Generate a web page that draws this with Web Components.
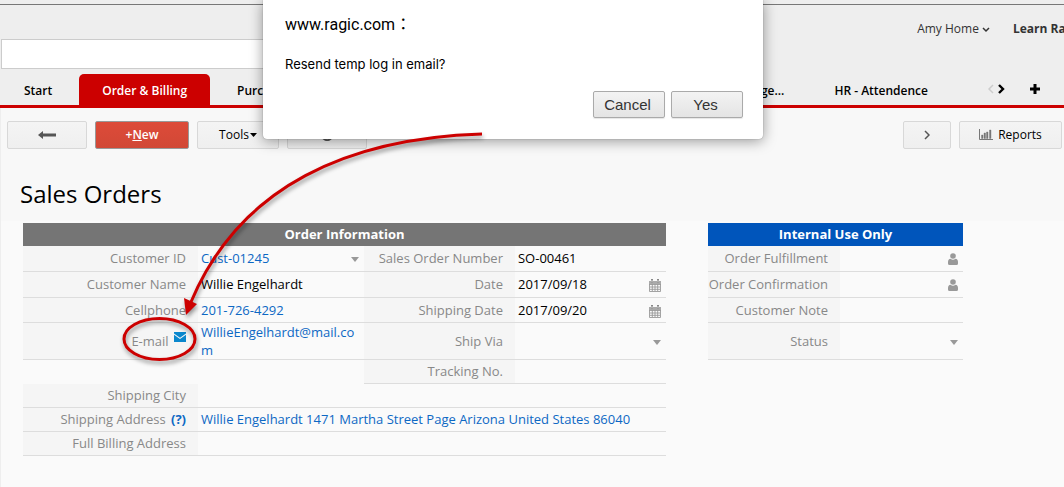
<!DOCTYPE html>
<html lang="en">
<head>
<meta charset="utf-8">
<meta name="viewport" content="width=device-width, initial-scale=1">
<title>Sales Orders</title>
<style>
  html { background: #fafafa; }
  body { margin: 0; position: relative; overflow-x: hidden; color: #000; font: 13px/18px "Open Sans", "Noto Sans", sans-serif; }
</style>
</head>
<body>
<app-header></app-header>
<tab-bar>
  <tab-item>Start</tab-item>
  <tab-item current>Order &amp; Billing</tab-item>
  <tab-item>Purchase</tab-item>
  <tab-item slot="late">Manage...</tab-item>
  <tab-item slot="late">HR - Attendence</tab-item>
</tab-bar>
<order-page heading="Sales Orders">
  <tool-button slot="tools" size="m" label="Back"><ui-icon name="back"></ui-icon></tool-button>
  <tool-button slot="tools" size="l" primary><span>+<u>N</u>ew</span></tool-button>
  <tool-button slot="tools" size="menu"><span>Tools</span><ui-icon name="caret"></ui-icon></tool-button>
  <tool-button slot="tools" size="m" label="Refresh"><ui-icon name="refresh"></ui-icon></tool-button>
  <tool-button slot="actions" size="s" label="Next record"><ui-icon name="right"></ui-icon></tool-button>
  <tool-button slot="actions" size="xl"><ui-icon name="chart"></ui-icon><span>Reports</span></tool-button>
  <order-table></order-table>
  <internal-table></internal-table>
</order-page>
<confirm-dialog>
  <span slot="site">www.ragic.com：</span>
  Resend temp log in email?
</confirm-dialog>
<callout-mark></callout-mark>

<script>
const define = (name, html, after) => customElements.define(name, class extends HTMLElement {
  constructor() {
    super();
    this.attachShadow({ mode: 'open' }).innerHTML = html;
  }
  connectedCallback() { if (after) after(this, this.shadowRoot); }
});

const icons = {
  back: [18, 8, '<path d="M0 4 5 0v2.500h13v3H5V8z" fill="#555"/>'],
  caret: [7, 4, '<path d="M0 0h7L3.500 4z" fill="#000"/>'],
  refresh: [12, 12, '<path d="M10 3a5 5 0 1 0 1 4" fill="none" stroke="#555" stroke-width="2"/><path d="M12 0v5H7z" fill="#555"/>'],
  right: [6, 10, '<path d="M1 1l4 4-4 4" fill="none" stroke="#555" stroke-width="1.5"/>'],
  chart: [14, 12, '<path d="M.5 0v10.500H14" fill="none" stroke="#777"/><path d="M2.500 6h1.500v3.500H2.500zM5 4h1.500v5.500H5zM7.500 3H9v6.500H7.500zM10.500 1H12v8.500h-1.500z" fill="#777" stroke="#777" stroke-width=".4"/>'],
  down: [8, 6, '<path d="M1 1l3 3 3-3" fill="none" stroke="#333" stroke-width="1.500"/>'],
  prev: [6, 10, '<path d="M5 1L1 5l4 4" fill="none" stroke="#ccc" stroke-width="1.500"/>'],
  next: [7, 10, '<path d="M1 1l4 4-4 4" fill="none" stroke="#000" stroke-width="2.400"/>'],
  plus: [10, 10, '<path d="M5 0v10M0 5h10" stroke="#000" stroke-width="3"/>'],
  select: [8, 5, '<path d="M0 0h8L4 5z" fill="#999"/>'],
  calendar: [12, 13, '<path d="M.5 2.500h11v10H.5zM0 5.500h12M1 8h10M1 10.300h10M3.300 5v7M6 5v7M8.700 5v7" fill="none" stroke="#999" stroke-width=".9"/><path d="M0 2h12v3H0z" fill="#aaa"/><path d="M3 0v4M9 0v4" stroke="#888" stroke-width="2"/><path d="M3 1v2.500M9 1v2.500" stroke="#fff" stroke-width=".7"/>'],
  person: [10, 12, '<circle cx="5" cy="3" r="2.800" fill="#999"/><path d="M0 10.500V9q0-3 2.500-3.200Q5 7.500 7.500 5.800 10 6 10 9v1.500Q10 12 8.500 12h-7Q0 12 0 10.500z" fill="#999"/>'],
  mail: [12, 10, '<path d="M0 0h12v1.500L6 5.800 0 1.500z" fill="#0a87cd"/><path d="M0 2.800l6 4.200L12 2.800V10H0z" fill="#0a87cd"/>']
};
define('ui-icon', '<style>:host{display:inline-block;flex:none}svg{display:block}</style><svg aria-hidden="true"></svg>', (el, root) => {
  const [w, h, art] = icons[el.getAttribute('name')];
  const svg = root.querySelector('svg');
  svg.setAttribute('width', w);
  svg.setAttribute('height', h);
  svg.setAttribute('viewBox', `0 0 ${w} ${h}`);
  svg.innerHTML = art;
});

define('app-header', `<style>
  :host { display: block; background: #eee; padding-top: 4px; font-size: 12px; }
  header { display: flex; justify-content: space-between; border-top: 1px solid #777; padding-left: 1px; }
  input { box-sizing: border-box; width: 48%; height: 30px; margin: 34px 0 5px; border: 1px solid #ccc; background: #fff; font: inherit; padding: 0 8px; outline: 0; }
  nav { display: flex; gap: 23px; padding-top: 15px; white-space: nowrap; }
  a { color: #333; text-decoration: none; }
  .learn { width: 51px; font-weight: 700; }
</style>
<header>
  <input type="search" aria-label="Search">
  <nav><a href="#account">Amy Home <ui-icon name="down"></ui-icon></a><a class="learn" href="#learn">Learn Ra</a></nav>
</header>`);

define('tab-item', `<style>
  :host { display: block; }
  a { display: block; box-sizing: border-box; height: 31px; padding: 8px 23px 5px; border-radius: 5px 5px 0 0; color: #000; font-weight: 600; text-decoration: none; white-space: nowrap; }
  :host([current]) a { background: #c00; color: #fff; }
</style><a href="#tab"><slot></slot></a>`);

define('tab-bar', `<style>
  :host { display: block; background: #eee; border-bottom: 3px solid #c00; font-size: 12px; }
  nav, .group, .pager { display: flex; align-items: center; }
  nav { justify-content: space-between; padding: 0 24px 0 1px; }
  .group { gap: 4px; }
  .pager { gap: 4px; padding-left: 33px; }
  button { display: block; border: 0; background: none; padding: 0; }
  .add { padding-left: 21px; }
</style>
<nav>
  <div class="group"><slot></slot></div>
  <div class="group"><slot name="late"></slot>
    <div class="pager"><button aria-label="Previous tabs"><ui-icon name="prev"></ui-icon></button><button aria-label="More tabs"><ui-icon name="next"></ui-icon></button><button class="add" aria-label="Add tab"><ui-icon name="plus"></ui-icon></button></div>
  </div>
</nav>`);

define('tool-button', `<style>
  :host { display: block; width: 80px; }
  :host([size=s]) { width: 48px; }
  :host([size=menu]) { width: 82px; }
  :host([size=l]) { width: 94px; }
  :host([size=xl]) { width: 103px; }
  button { box-sizing: border-box; width: 100%; height: 28px; display: flex; align-items: center; justify-content: center; gap: 5px; padding: 0; border: 1px solid #d8d8d8; border-radius: 2px; background: linear-gradient(#f4f4f4, #efefef); color: #000; font: 12px/18px "Open Sans", sans-serif; }
  :host([size=menu]) button { gap: 1px; }
  :host([primary]) button { background: linear-gradient(#dd4b39, #d14836); border-color: #999; color: #fff; font-weight: 600; }
</style><button type="button"><slot></slot></button>`, (el, root) => {
  if (el.hasAttribute('label')) root.querySelector('button').setAttribute('aria-label', el.getAttribute('label'));
});

define('order-page', `<style>
  :host { display: block; border-left: 1px solid #eee; }
  .top { background: #f8f8f8; }
  .bar, .set { display: flex; }
  .bar { justify-content: space-between; padding: 13px 2px 0 6px; }
  .set { gap: 8px; }
  h1 { margin: 0; padding: 29px 19px 11px; font-size: 24px; line-height: 32px; font-weight: 400; }
  main { display: grid; grid-template-columns: 643fr 255fr; gap: 42px; align-items: start; padding: 2px 101px 31px 22px; }
</style>
<div class="top">
  <div class="bar"><div class="set"><slot name="tools"></slot></div><div class="set"><slot name="actions"></slot></div></div>
  <h1></h1>
</div>
<main><slot></slot></main>`, (el, root) => { root.querySelector('h1').textContent = el.getAttribute('heading'); });

const tableStyle = `<style>
  :host { display: block; }
  table { width: 100%; border-collapse: separate; border-spacing: 0; table-layout: fixed; line-height: 18px; }
  th, td { box-sizing: border-box; padding: 0; border-bottom: 1px solid #ddd; vertical-align: middle; }
  thead th { height: 23px; padding-bottom: 1px; border: 0; color: #fff; background: #757575; font-weight: 700; text-align: center; }
  tbody th { padding-right: 12px; background: #f5f5f5; color: #888; font-weight: 400; text-align: right; white-space: nowrap; }
  td { padding: 0 3px; }
  .blank { border: 0; background: none; }
  .r26 { height: 26px; } .r25 { height: 25px; } .r24 { height: 24px; } .r37 { height: 37px; }
  .r26 > *, .r24 > * { padding-bottom: 1px; }
  a { color: #0d68c4; text-decoration: none; }
  .wrap { word-break: break-all; }
  .field { display: flex; align-items: center; justify-content: space-between; padding-right: 2px; }
  input, select { appearance: none; box-sizing: border-box; display: block; flex: 1; min-width: 0; width: 100%; height: 18px; margin: 0; padding: 0; border: 0; outline: 0; background: none; color: inherit; font: inherit; }
  .link { color: #0d68c4; }
  .field ui-icon { margin-top: 2px; }
  button { display: inline-block; margin-left: 2px; padding: 0; border: 0; background: none; line-height: 0; vertical-align: 4px; }
  .help { font-weight: 700; margin-left: 2px; }
</style>`;

define('order-table', tableStyle + `
<table>
  <colgroup><col style="width:175px"><col><col style="width:151px"><col style="width:151px"></colgroup>
  <thead><tr><th colspan="4">Order Information</th></tr></thead>
  <tbody>
    <tr class="r26"><th scope="row"><label for="cid">Customer ID</label></th>
      <td><div class="field"><select id="cid" class="link"><option>Cust-01245</option></select><ui-icon name="select"></ui-icon></div></td>
      <th scope="row"><label for="son">Sales Order Number</label></th><td><input id="son" value="SO-00461"></td></tr>
    <tr class="r26"><th scope="row"><label for="name">Customer Name</label></th><td><input id="name" value="Willie Engelhardt"></td>
      <th scope="row"><label for="date">Date</label></th><td><div class="field"><input id="date" value="2017/09/18"><ui-icon name="calendar"></ui-icon></div></td></tr>
    <tr class="r25"><th scope="row">Cellphone</th><td><a href="tel:2017264292">201-726-4292</a></td>
      <th scope="row"><label for="ship">Shipping Date</label></th><td><div class="field"><input id="ship" value="2017/09/20"><ui-icon name="calendar"></ui-icon></div></td></tr>
    <tr class="r37"><th scope="row">E-mail <button type="button" aria-label="Send email"><ui-icon name="mail"></ui-icon></button></th>
      <td class="wrap"><a href="mailto:WillieEngelhardt@mail.com">WillieEngelhardt@mail.com</a></td>
      <th scope="row"><label for="via">Ship Via</label></th><td><div class="field"><select id="via"><option></option></select><ui-icon name="select"></ui-icon></div></td></tr>
    <tr class="r24"><td colspan="2" class="blank"></td><th scope="row"><label for="track">Tracking No.</label></th><td><input id="track"></td></tr>
    <tr class="r24"><th scope="row"><label for="city">Shipping City</label></th><td colspan="3"><input id="city"></td></tr>
    <tr class="r24"><th scope="row">Shipping Address <a class="help" href="#help">(?)</a></th><td colspan="3"><a href="#map">Willie Engelhardt 1471 Martha Street Page Arizona United States 86040</a></td></tr>
    <tr class="r24"><th scope="row"><label for="bill">Full Billing Address</label></th><td colspan="3"><input id="bill"></td></tr>
  </tbody>
</table>`);

define('internal-table', tableStyle + `<style>thead th { background: #0055bb; }</style>
<table>
  <colgroup><col style="width:132px"><col></colgroup>
  <thead><tr><th colspan="2">Internal Use Only</th></tr></thead>
  <tbody>
    <tr class="r26"><th scope="row"><label for="ful">Order Fulfillment</label></th><td><div class="field"><input id="ful"><ui-icon name="person"></ui-icon></div></td></tr>
    <tr class="r26"><th scope="row"><label for="con">Order Confirmation</label></th><td><div class="field"><input id="con"><ui-icon name="person"></ui-icon></div></td></tr>
    <tr class="r25"><th scope="row"><label for="note">Customer Note</label></th><td><input id="note"></td></tr>
    <tr class="r37"><th scope="row"><label for="status">Status</label></th><td><div class="field"><select id="status"><option></option></select><ui-icon name="select"></ui-icon></div></td></tr>
  </tbody>
</table>`);

define('confirm-dialog', `<style>
  :host { position: absolute; top: 0; left: 263px; width: 500px; }
  section { box-sizing: border-box; padding: 15px 20px 21px 22px; background: #fff; border-radius: 0 0 4px 4px; box-shadow: 0 2px 14px rgba(0,0,0,.4), 0 0 1px rgba(0,0,0,.5); font-family: Roboto, "Noto Sans CJK TC", sans-serif; }
  h2 { margin: 0 0 20px; font-size: 16px; line-height: 20px; font-weight: 400; }
  p { margin: 0 0 18px; font-family: Inter, sans-serif; font-size: 13px; line-height: 18px; }
  div { display: flex; justify-content: flex-end; gap: 6px; }
  button { box-sizing: border-box; width: 72px; height: 27px; padding: 0 3px 0 0; border: 1px solid #aaa; border-radius: 2px; background: linear-gradient(#f3f3f3, #e4e4e4); color: #333; font: 15px/20px "Liberation Sans", Arial, sans-serif; box-shadow: 0 1px 1px rgba(0,0,0,.1); }
</style>
<section role="dialog" aria-label="Confirm">
  <h2><slot name="site"></slot></h2>
  <p><slot></slot></p>
  <div><button type="button">Cancel</button><button type="button">Yes</button></div>
</section>`);

define('callout-mark', `<style>
  :host { position: absolute; top: 0; left: 0; pointer-events: none; }
  svg { display: block; filter: drop-shadow(1px 3px 2px rgba(0,0,0,.4)); }
</style>
<svg width="500" height="380" viewBox="0 0 500 380" aria-hidden="true">
  <g fill="none" stroke="#c00" stroke-width="3"><path d="M482 134C350 138 240 185 191 302"/><ellipse cx="159.500" cy="339" rx="35.500" ry="20.500"/></g>
  <path d="M186 315l-2-17 13 6z" fill="#c00"/>
</svg>`);
</script>
</body>
</html>
